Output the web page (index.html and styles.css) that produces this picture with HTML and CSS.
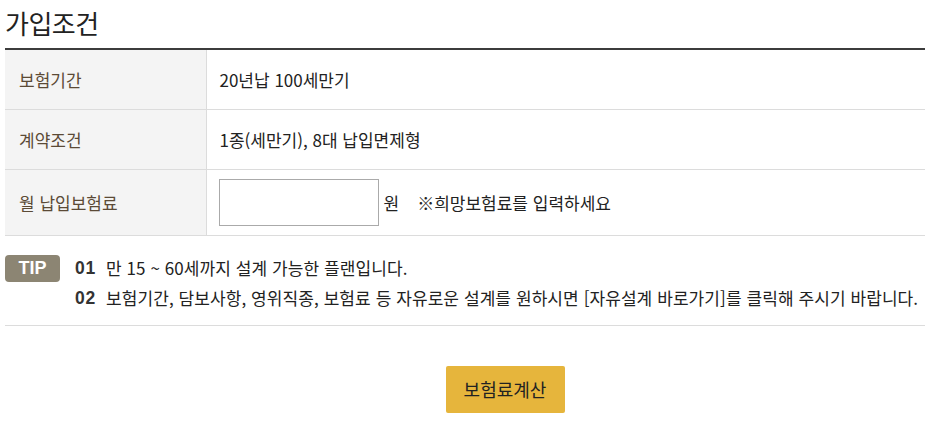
FILE: index.html
```html
<!DOCTYPE html>
<html lang="ko">
<head>
<meta charset="utf-8">
<link rel="stylesheet" href="styles.css">
</head>
<body>
<div class="wrap">
  <h2 class="title">가입조건</h2>
  <table class="cond">
    <tr>
      <th>보험기간</th>
      <td>20년납 100세만기</td>
    </tr>
    <tr>
      <th>계약조건</th>
      <td>1종(세만기), 8대 납입면제형</td>
    </tr>
    <tr class="row-input">
      <th>월 납입보험료</th>
      <td><input type="text" class="premium"><span class="won">원</span><span class="hint"><span class="mark">※</span>희망보험료를 입력하세요</span></td>
    </tr>
  </table>
  <div class="tips">
    <span class="badge">TIP</span>
    <ul class="tip-list">
      <li><b>01</b><span>만 15 ~ 60세까지 설계 가능한 플랜입니다.</span></li>
      <li><b>02</b><span>보험기간, 담보사항, 영위직종, 보험료 등 자유로운 설계를 원하시면 [자유설계 바로가기]를 클릭해 주시기 바랍니다.</span></li>
    </ul>
  </div>
  <div class="actions">
    <button class="calc">보험료계산</button>
  </div>
</div>
</body>
</html>
```
FILE: styles.css
```css
* { box-sizing: border-box; }
body {
  margin: 0;
  font-family: "Noto Sans CJK KR", "Noto Sans", sans-serif;
  color: #222;
  background: #fff;
}
.wrap {
  padding: 0 1px 0 5px;
}
.title {
  margin: 0;
  height: 48px;
  padding-top: 3px;
  font-size: 26px;
  font-weight: 400;
  line-height: 40px;
  letter-spacing: -0.5px;
  color: #222;
}
.cond {
  width: 100%;
  border-collapse: collapse;
  border-top: 2px solid #3c3c3c;
}
.cond th, .cond td {
  border-bottom: 1px solid #dcdcdc;
  height: 60px;
  font-size: 17px;
  font-weight: 400;
  text-align: left;
  vertical-align: middle;
}
.cond th {
  width: 201px;
  background: #f4f4f4;
  color: #5b4a36;
  padding-left: 14px;
  border-right: 1px solid #dcdcdc;
}
.cond td {
  padding-left: 13px;
  color: #222;
}
.row-input th, .row-input td { height: 66px; }
.premium {
  width: 160px;
  height: 47px;
  border: 1px solid #aaa;
  vertical-align: middle;
  margin: 0 0 0 -1px;
}
.won { margin-left: 5px; vertical-align: middle; }
.hint {
  margin-left: 18px;
  vertical-align: middle;
  color: #222;
}
.mark {
  font-family: "Noto Sans CJK KR", "DejaVu Sans", sans-serif;
  color: #222;
}
.tips {
  display: flex;
  align-items: flex-start;
  padding: 17px 0 12px;
  border-bottom: 1px solid #dcdcdc;
}
.badge {
  flex: none;
  width: 55px;
  height: 27px;
  margin-top: 2px;
  background: #8c8573;
  border-radius: 4px;
  color: #fff;
  font-family: "Liberation Sans", Arial, sans-serif;
  font-weight: 700;
  font-size: 18px;
  line-height: 27px;
  text-align: center;
}
.tip-list {
  list-style: none;
  margin: 0 0 0 15px;
  padding: 0;
}
.tip-list li {
  display: flex;
  font-size: 17px;
  line-height: 30px;
  letter-spacing: 0.08px;
  color: #222;
}
.tip-list b {
  width: 31px;
  font-family: "Liberation Sans", Arial, sans-serif;
  font-weight: 700;
  font-size: 17.5px;
  letter-spacing: 0.8px;
  color: #333;
}
.actions {
  display: flex;
  justify-content: center;
  padding-top: 40px;
}
.calc {
  width: 119px;
  height: 47px;
  margin-left: 80px;
  border: 0;
  border-radius: 2px;
  background: #e6b53c;
  color: #222;
  font-family: "Noto Sans CJK KR", sans-serif;
  font-size: 18px;
}
```
